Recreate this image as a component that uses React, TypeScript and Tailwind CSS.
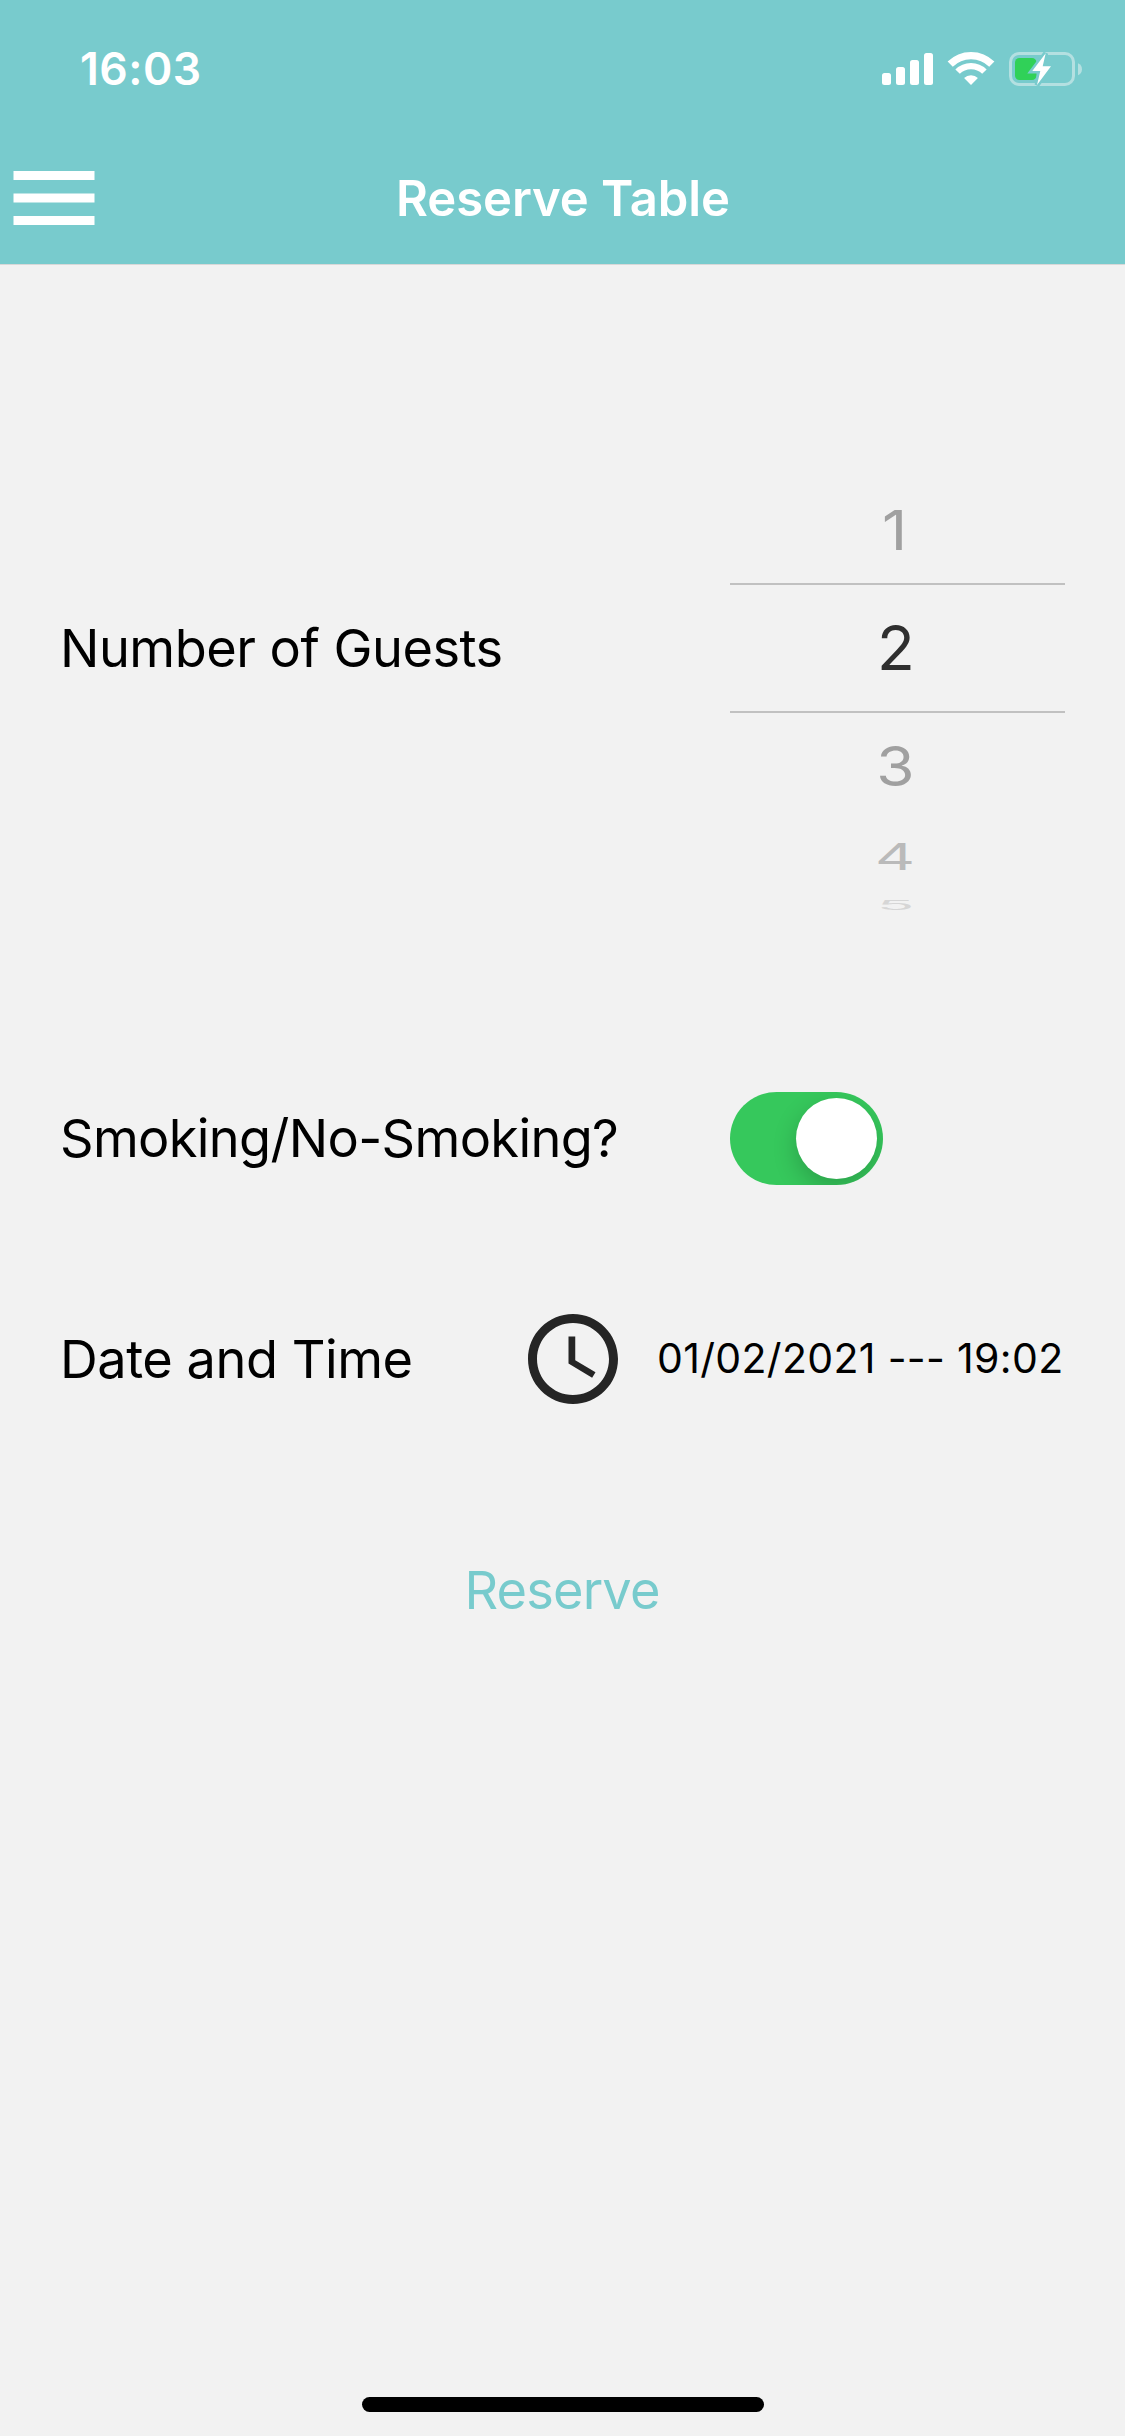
import { MdAccessTime, MdMenu } from "react-icons/md";

function SignalIcon() {
  return (
    <svg width="52" height="32" viewBox="0 0 52 32" fill="#fff">
      <rect x="0" y="20" width="9" height="12" rx="2.5" />
      <rect x="14" y="14" width="9" height="18" rx="2.5" />
      <rect x="28" y="7" width="9" height="25" rx="2.5" />
      <rect x="42" y="0" width="9" height="32" rx="2.5" />
    </svg>
  );
}

function WifiIcon() {
  return (
    <svg width="48" height="36" viewBox="0 0 48 36" fill="none" stroke="#fff">
      <path d="M3.2 13.2A29.4 29.4 0 0 1 44.8 13.2" strokeWidth="7.3" />
      <path d="M10.6 20.6A18.9 18.9 0 0 1 37.4 20.6" strokeWidth="6.3" />
      <path d="M24 34L17.1 27.1A9.7 9.7 0 0 1 30.9 27.1Z" fill="#fff" stroke="none" />
    </svg>
  );
}

function BatteryIcon() {
  const bolt = "M36.7 3.3L23.3 21H31.3L28 35L42 16.3H33.7Z";
  return (
    <svg width="74" height="38" viewBox="0 0 74 38" fill="none">
      <rect x="1.5" y="3.5" width="63" height="31" rx="8.5" stroke="#b4e0e1" strokeWidth="3" />
      <path d="M69 13.2C71.5 14.2 73 16.4 73 19.2S71.5 24.2 69 25.2Z" fill="#b4e0e1" />
      <rect x="6" y="8" width="21.5" height="22" rx="4.5" fill="#30d158" />
      <path d={bolt} fill="#78cbcd" stroke="#78cbcd" strokeWidth="5" />
      <path d={bolt} fill="#fff" />
    </svg>
  );
}

function GuestPicker() {
  return (
    <div className="flex h-[648px] w-[335px] flex-col pt-[153px] text-center text-[62px] leading-none">
      <div className="flex h-[106px] items-center justify-center pr-[6px] text-[#a0a0a0]">
        <span className="scale-y-[0.89]">1</span>
      </div>
      <div className="flex h-[130px] items-center justify-center border-y-2 border-[#c1c1c1] pr-[3px] text-[#2f2f2f]">
        <span>2</span>
      </div>
      <div className="flex h-[105px] items-center justify-center pr-[4px] text-[#a0a0a0]">
        <span className="scale-y-[0.89]">3</span>
      </div>
      <div className="flex h-[77px] items-center justify-center pr-[5px] text-[#bababa]">
        <span className="scale-y-[0.59]">4</span>
      </div>
      <div className="flex h-[22px] items-center justify-center pr-[4px] text-[#d6d6d6]">
        <span className="scale-y-[0.2]">5</span>
      </div>
    </div>
  );
}

function Toggle() {
  return (
    <div
      role="switch"
      aria-checked="true"
      className="flex h-[93px] w-[153px] items-center justify-end overflow-hidden rounded-full bg-[#36c85c] pr-[6px]"
    >
      <div className="size-[81px] rounded-full bg-white shadow-[0_9px_24px_rgba(0,0,0,0.2)]" />
    </div>
  );
}

export default function App() {
  return (
    <div className="flex h-[2436px] w-[1125px] flex-col bg-[#f2f2f2] font-['Inter',sans-serif] text-black">
      <header className="h-[265px] border-b border-[#d8d8d8] bg-[#78cbcd] text-white">
        <div className="flex h-[132px] items-center justify-between pt-[6px] pr-[42px] pl-[80px]">
          <span className="text-[44.5px] leading-none font-semibold tracking-[0.5px]">16:03</span>
          <div className="flex items-center">
            <SignalIcon />
            <div className="ml-[13px]">
              <WifiIcon />
            </div>
            <div className="ml-[14px]">
              <BatteryIcon />
            </div>
          </div>
        </div>
        <div className="grid h-[132px] grid-cols-[108px_1fr_108px] items-center">
          <MdMenu size={108} />
          <h1 className="pl-px text-center text-[49px] leading-none font-semibold tracking-[-0.07px]">Reserve Table</h1>
        </div>
      </header>

      <main className="flex flex-1 flex-col pt-[59px] pr-[60px] pl-[60px] text-[52.3px] leading-none">
        <div className="flex items-center justify-between">
          <span className="tracking-[-0.5px]">Number of Guests</span>
          <GuestPicker />
        </div>
        <div className="mt-[120px] flex items-center">
          <span className="w-[670px] tracking-[-0.65px]">Smoking/No-Smoking?</span>
          <Toggle />
        </div>
        <div className="mt-[120px] flex items-center">
          <span className="w-[459px] tracking-[-0.47px]">Date and Time</span>
          <MdAccessTime size={108} color="#252525" />
          <span className="ml-[30px] pb-[2px] text-[41px] leading-none whitespace-nowrap tracking-[0.33px]">
            01/02/2021 --- 19:02
          </span>
        </div>
        <button className="mt-[147px] h-[60px] self-center pr-px leading-none tracking-[-0.8px] text-[#78cbcd]">
          Reserve
        </button>
      </main>

      <div className="mb-[24px] h-[15px] w-[402px] self-center rounded-full bg-black" />
    </div>
  );
}
